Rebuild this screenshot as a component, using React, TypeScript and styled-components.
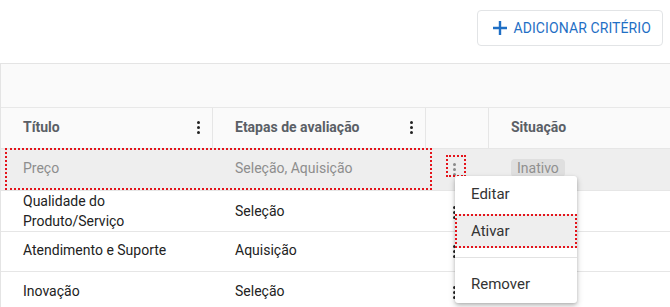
import * as React from 'react';
import styled, { createGlobalStyle } from 'styled-components';

const GlobalStyle = createGlobalStyle`
    html, body {
        margin: 0;
        padding: 0;
        background: #ffffff;
        font-family: Roboto, 'Liberation Sans', sans-serif;
        overflow: hidden;
    }
`;

const Page = styled.main`
    width: 670px;
    height: 307px;
    overflow: hidden;
    position: relative;
`;

const TopBar = styled.div`
    display: flex;
    justify-content: flex-end;
    padding: 10px 7px 17px 0;
`;

const AddButton = styled.button`
    display: flex;
    align-items: center;
    gap: 4px;
    height: 36px;
    padding: 0 11px 0 13px;
    border: 1px solid #e2e4e6;
    border-radius: 4px;
    background: #ffffff;
    color: #1f6fc5;
    font-family: Roboto, sans-serif;
    font-size: 14px;
    font-weight: 400;
    letter-spacing: 0.1px;
    text-transform: uppercase;
`;

const Table = styled.div`
    width: 720px;
    border-left: 1px solid #e4e4e4;
    border-top: 1px solid #e4e4e4;
`;

const Toolbar = styled.div`
    height: 43px;
    background: #fafafa;
    border-bottom: 1px solid #e8e8e8;
`;

const Row = styled.div<{ $bg?: string; $height?: number }>`
    position: relative;
    display: grid;
    grid-template-columns: 212px 213px 63px 1fr;
    height: ${(p) => p.$height ?? 40}px;
    background: ${(p) => p.$bg ?? '#ffffff'};
    border-bottom: 1px solid #e6e6e6;
`;

const HeadCell = styled.div<{ $sep?: boolean }>`
    display: flex;
    align-items: center;
    justify-content: space-between;
    padding: 0 12px 2px 22px;
    font-size: 14px;
    font-weight: 700;
    color: #5a5f66;
    border-right: ${(p) => (p.$sep ? '1px solid #e6e6e6' : 'none')};
`;

const Cell = styled.div<{ $muted?: boolean }>`
    display: flex;
    align-items: center;
    padding: 0 10px 3px 22px;
    font-size: 14px;
    line-height: 20px;
    color: ${(p) => (p.$muted ? '#8d8d8d' : '#222222')};
`;

const ActionCell = styled.div`
    display: flex;
    align-items: center;
    padding-left: 27px;
`;

const Badge = styled.span`
    padding: 1px 6px;
    border-radius: 4px;
    background: #dfdfdf;
    color: #8f8f8f;
    font-size: 14px;
    line-height: 16px;
`;

const Kebab = styled.span<{ $color?: string }>`
    display: inline-flex;
    flex-direction: column;
    gap: 2px;
    & > i {
        width: 3px;
        height: 3px;
        border-radius: 50%;
        background: ${(p) => p.$color ?? '#222222'};
    }
`;

const Highlight = styled.div<{ $l: number; $t: number; $w: number; $h: number }>`
    position: absolute;
    left: ${(p) => p.$l}px;
    top: ${(p) => p.$t}px;
    width: ${(p) => p.$w}px;
    height: ${(p) => p.$h}px;
    border: 2px dotted #e4141b;
    box-sizing: border-box;
    pointer-events: none;
`;

const Menu = styled.div`
    position: absolute;
    left: 455px;
    top: 176px;
    width: 122px;
    padding: 0 0 2px;
    background: #ffffff;
    border-radius: 3px;
    box-shadow: 0 3px 6px rgba(0, 0, 0, 0.22), 0 1px 3px rgba(0, 0, 0, 0.15);
`;

const MenuItem = styled.div<{ $active?: boolean; $height?: number; $gap?: number }>`
    position: relative;
    display: flex;
    align-items: center;
    height: ${(p) => p.$height ?? 34}px;
    margin-bottom: ${(p) => p.$gap ?? 0}px;
    padding-left: 16px;
    font-size: 15px;
    color: #333333;
    background: ${(p) => (p.$active ? '#eeeeee' : 'transparent')};
`;

const Divider = styled.div`
    height: 1px;
    margin: 9px 0 9px;
    background: #e2e2e2;
`;

function Dots({ color }: { color?: string }): JSX.Element {
    return (
        <Kebab $color={color}>
            <i />
            <i />
            <i />
        </Kebab>
    );
}

function PlusIcon(): JSX.Element {
    return (
        <svg width="18" height="18" viewBox="0 0 18 18">
            <path d="M9 2v14M2 9h14" stroke="#1f6fc5" strokeWidth="2.4" />
        </svg>
    );
}

const rows = [
    { title: ['Qualidade do', 'Produto/Serviço'], stage: 'Seleção', height: 40 },
    { title: ['Atendimento e Suporte'], stage: 'Aquisição', height: 39 },
    { title: ['Inovação'], stage: 'Seleção', height: 40 },
];

function CriteriaPage(): JSX.Element {
    return (
        <Page>
            <GlobalStyle />
            <TopBar>
                <AddButton>
                    <PlusIcon />
                    Adicionar critério
                </AddButton>
            </TopBar>
            <Table>
                <Toolbar />
                <Row $bg="#fafafa" $height={40}>
                    <HeadCell $sep>
                        Título
                        <Dots />
                    </HeadCell>
                    <HeadCell $sep>
                        Etapas de avaliação
                        <Dots />
                    </HeadCell>
                    <HeadCell $sep />
                    <HeadCell>Situação</HeadCell>
                </Row>
                <Row $bg="#eeeeee" $height={41}>
                    <Cell $muted>Preço</Cell>
                    <Cell $muted>Seleção, Aquisição</Cell>
                    <ActionCell>
                        <Dots color="#8a8a8a" />
                    </ActionCell>
                    <Cell>
                        <Badge>Inativo</Badge>
                    </Cell>
                    <Highlight $l={4} $t={-1} $w={427} $h={42} />
                    <Highlight $l={445} $t={6} $w={20} $h={22} />
                </Row>
                {rows.map((r) => (
                    <Row key={r.stage + r.title[0]} $height={r.height}>
                        <Cell>
                            <div>
                                {r.title.map((t) => (
                                    <div key={t}>{t}</div>
                                ))}
                            </div>
                        </Cell>
                        <Cell>{r.stage}</Cell>
                        <ActionCell>
                            <Dots />
                        </ActionCell>
                        <Cell />
                    </Row>
                ))}
            </Table>
            <Menu>
                <MenuItem $height={36} $gap={2}>
                    Editar
                </MenuItem>
                <MenuItem $active>
                    Ativar
                    <Highlight $l={0} $t={0} $w={122} $h={34} />
                </MenuItem>
                <Divider />
                <MenuItem>Remover</MenuItem>
            </Menu>
        </Page>
    );
}

export default CriteriaPage;
